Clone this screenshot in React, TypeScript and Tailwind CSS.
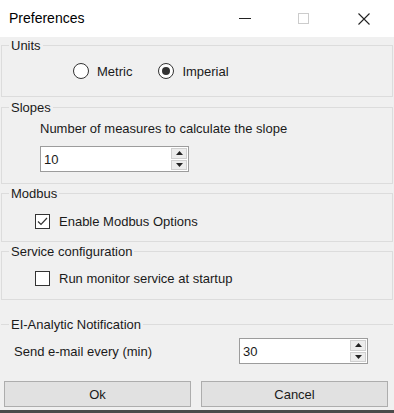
import React from 'react';

const font = { fontFamily: '"Liberation Sans", Arial, sans-serif' };

function Spin({ value, className }: { value: string; className: string }) {
  return (
    <div className={`flex h-[26px] items-stretch border border-[#9c9c9c] bg-white ${className}`}>
      <div className="flex flex-1 items-center pl-[3px] text-[13px] leading-[15px]">{value}</div>
      <div className="flex w-[17px] flex-col gap-[1px] py-[1px] pr-[1px]">
        <div className="flex flex-1 items-center justify-center border border-[#cfcfcf] bg-[#ececec]">
          <svg width="7" height="4" viewBox="0 0 7 4">
            <path d="M0 4 L3.5 0 L7 4 Z" fill="#222" />
          </svg>
        </div>
        <div className="flex flex-1 items-center justify-center border border-[#cfcfcf] bg-[#ececec]">
          <svg width="7" height="4" viewBox="0 0 7 4">
            <path d="M0 0 L3.5 4 L7 0 Z" fill="#222" />
          </svg>
        </div>
      </div>
    </div>
  );
}

function Radio({ label, checked }: { label: string; checked?: boolean }) {
  return (
    <div className="flex items-center gap-[8px]">
      <div className="flex h-[16px] w-[16px] items-center justify-center rounded-full border border-[#333] bg-white">
        {checked && <div className="h-[8px] w-[8px] rounded-full bg-[#333]" />}
      </div>
      <span>{label}</span>
    </div>
  );
}

function Check({ label, checked }: { label: string; checked?: boolean }) {
  return (
    <div className="flex items-center gap-[9px]">
      <div className="flex h-[15px] w-[15px] items-center justify-center border border-[#333] bg-white">
        {checked && (
          <svg width="11" height="9" viewBox="0 0 11 9">
            <path d="M1 4.5 L4 7.5 L10 1" fill="none" stroke="#333" strokeWidth="1.2" />
          </svg>
        )}
      </div>
      <span>{label}</span>
    </div>
  );
}

function Group({ title, className, children }: { title: string; className: string; children: React.ReactNode }) {
  return (
    <fieldset className={`mx-[1px] border border-[#dcdcdc] ${className}`}>
      <legend className="ml-[7px] px-[2px] text-[13px] leading-[15px]">{title}</legend>
      {children}
    </fieldset>
  );
}

export default function App() {
  return (
    <div className="flex h-[413px] w-[394px] flex-col bg-[#f0f0f0] text-[13px] leading-[15px] text-[#1a1a1a]" style={font}>
      {/* title bar */}
      <div className="flex h-[37px] shrink-0 items-center bg-white">
        <span className="ml-[9px] flex-1 text-[14px] text-black">Preferences</span>
        <div className="mr-[47px] h-[1px] w-[12px] bg-[#222]" />
        <div className="mr-[49px] h-[11px] w-[11px] border border-[#cccccc]" />
        <svg className="mr-[24px]" width="12" height="12" viewBox="0 0 12 12">
          <path d="M0.5 0.5 L11.5 11.5 M11.5 0.5 L0.5 11.5" stroke="#222" strokeWidth="1.1" />
        </svg>
      </div>

      <Group title="Units" className="mt-[1px] h-[59px]">
        <div className="mt-[10px] flex gap-[26px] pl-[71px]">
          <Radio label="Metric" />
          <Radio label="Imperial" checked />
        </div>
      </Group>

      <Group title="Slopes" className="mt-[3px] h-[84px]">
        <div className="pl-[38px]">
          <div className="mt-[6px]">Number of measures to calculate the slope</div>
          <Spin value="10" className="mt-[10px] w-[149px]" />
        </div>
      </Group>

      <Group title="Modbus" className="mt-[2px] h-[56px]">
        <div className="mt-[13px] pl-[33px]">
          <Check label="Enable Modbus Options" checked />
        </div>
      </Group>

      <Group title="Service configuration" className="mt-[2px] h-[56px]">
        <div className="mt-[12px] pl-[33px]">
          <Check label="Run monitor service at startup" />
        </div>
      </Group>

      <fieldset className="mx-[1px] mt-[17px] border-t border-[#dcdcdc]">
        <legend className="ml-[8px] px-[2px]">EI-Analytic Notification</legend>
        <div className="mt-[6px] flex items-center">
          <span className="ml-[13px] flex-1">Send e-mail every (min)</span>
          <Spin value="30" className="mr-[25px] w-[129px]" />
        </div>
      </fieldset>

      <div className="mt-[17px] flex gap-[10px] px-[4px] pr-[6px]">
        <button className="flex h-[26px] flex-1 items-center justify-center border border-[#adadad] bg-[#e1e1e1]">Ok</button>
        <button className="flex h-[26px] flex-1 items-center justify-center border border-[#adadad] bg-[#e1e1e1]">Cancel</button>
      </div>

      <div className="mt-auto h-[3px] bg-[#4a4a4a]" />
    </div>
  );
}
